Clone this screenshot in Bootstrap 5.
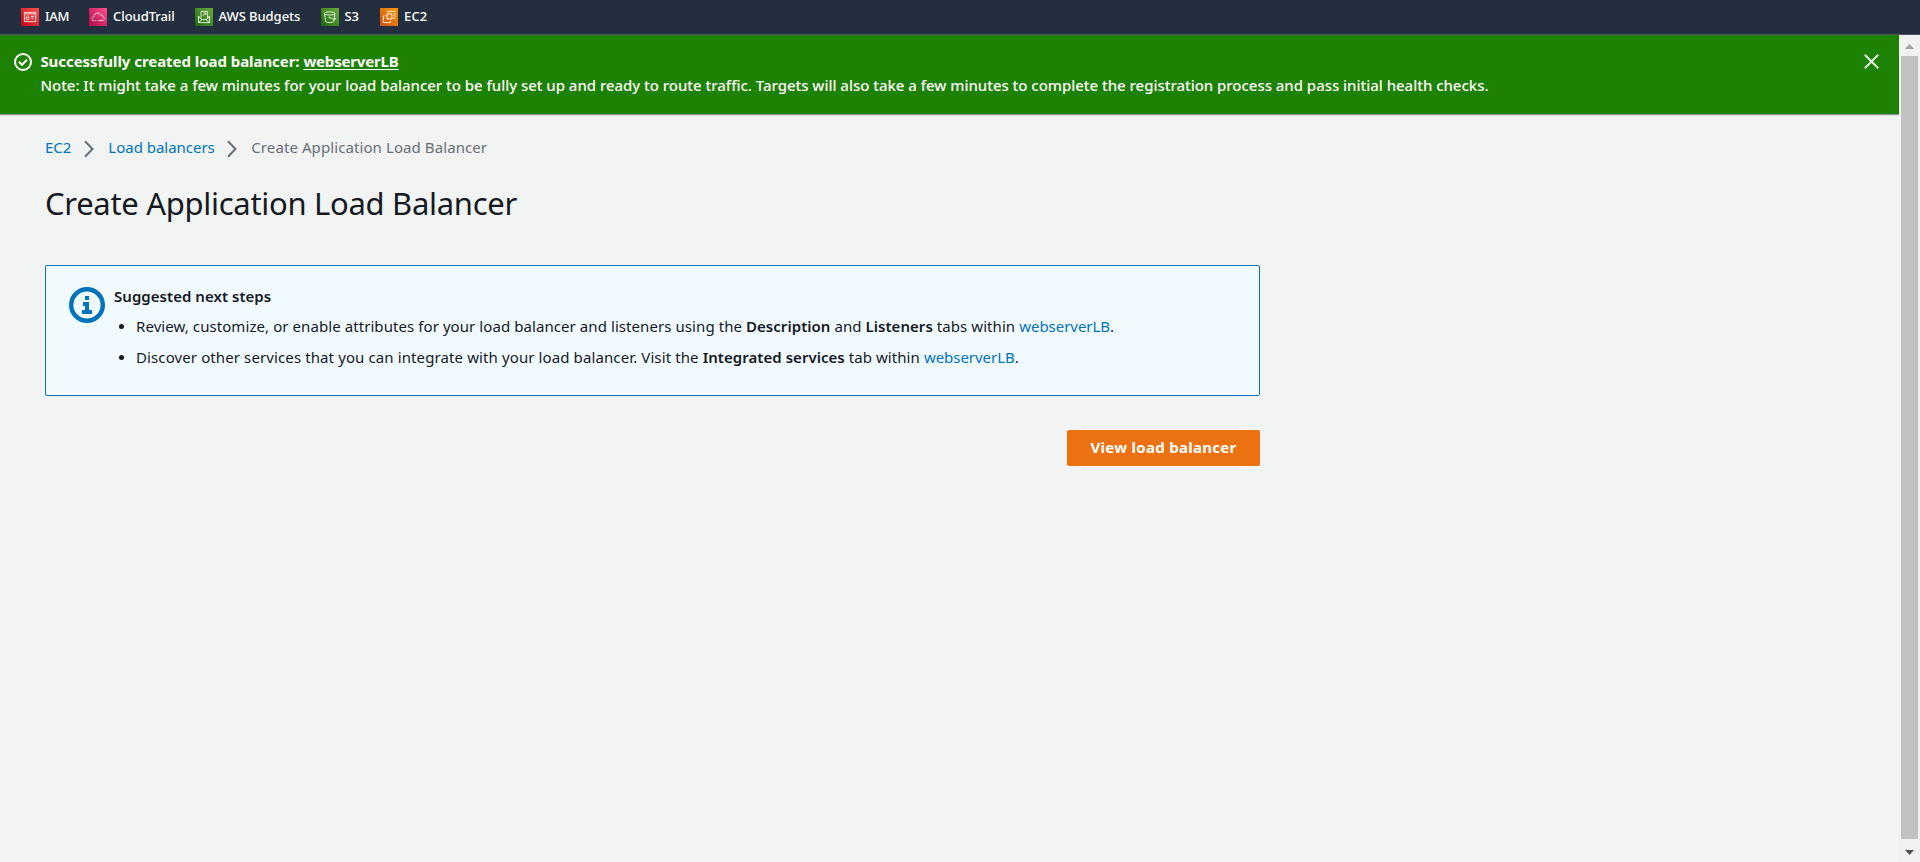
<!DOCTYPE html>
<html lang="en">
<head>
<meta charset="utf-8">
<title>Create Application Load Balancer</title>
<link href="https://cdn.jsdelivr.net/npm/bootstrap@5.3.0/dist/css/bootstrap.min.css" rel="stylesheet">
<style>
body{font:400 15px/24px "Noto Sans",sans-serif;background:#f2f3f3;color:#16191f;height:862px;overflow:hidden}
svg{display:block;flex:none}
a{text-decoration:none;color:#0073bb}
.svc-bar{height:35px;background:#232f3e;border-bottom:1px solid #4d5563;padding-left:21px}
.svc-item{color:#fff;font-size:13px;font-weight:500;line-height:16px;height:34px;gap:6px;letter-spacing:-.05px}
.svc-item span{margin-bottom:2px}
.viewport{height:827px}
.flash{height:79px;background:#1d8102;color:#fff;padding:14px 20px 0 14px;font-weight:500;box-shadow:0 1px 1px rgba(0,28,36,.45)}
.flash .title{font-weight:700;letter-spacing:-.05px}
.flash .title a{color:#fff;text-decoration:underline;text-underline-offset:2px;letter-spacing:-.17px}
.flash .note{letter-spacing:-.03px}
.content{padding:21px 0 0 45px;width:1260px}
.crumbs{height:24px}
.crumbs a{letter-spacing:-.02px}
.page-title{font-size:31px;line-height:38px;font-weight:400;letter-spacing:-.3px;margin:25px 0 43px}
.tips{height:131px;border:1px solid #0073bb;border-radius:2px;background:#f1faff;padding:18px 0 0 23px}
.tips strong{font-weight:600;letter-spacing:.04px}
.tips ul{list-style:none;margin:6px 0 0;padding:0;letter-spacing:.07px}
.tips li{display:flex;height:24px;margin-bottom:7px;white-space:pre}
.tips li::before{content:"";width:5px;height:5px;border-radius:50%;background:#16191f;margin:10px 12px 0 5px}
.tips li a{letter-spacing:-.03px}
.btn-view{background:#ec7211;color:#fff;font:700 15px/24px "Noto Sans",sans-serif;letter-spacing:.282px;width:193px;height:36px;border:0;border-radius:2px;padding:5px 0 7px;margin-top:34px}
.scroller{width:21px;background:#f1f1f1}
.scroller .thumb{width:17px;background:#c1c1c1;margin-left:2px}
</style>
<script src="https://cdn.jsdelivr.net/npm/bootstrap@5.3.0/dist/js/bootstrap.bundle.min.js"></script>
</head>
<body>
<svg width="0" height="0" class="position-absolute"><defs>
<linearGradient id="gr" x1="0" y1="1" x2="1" y2="0"><stop stop-color="#bd0816"/><stop offset="1" stop-color="#ff5252"/></linearGradient>
<linearGradient id="gp" x1="0" y1="1" x2="1" y2="0"><stop stop-color="#b0084d"/><stop offset="1" stop-color="#ff4f8b"/></linearGradient>
<linearGradient id="gg" x1="0" y1="1" x2="1" y2="0"><stop stop-color="#1b660f"/><stop offset="1" stop-color="#6cae3e"/></linearGradient>
<linearGradient id="go" x1="0" y1="1" x2="1" y2="0"><stop stop-color="#c8511b"/><stop offset="1" stop-color="#f90"/></linearGradient>
</defs></svg>

<nav class="svc-bar d-flex">
  <a href="#" class="svc-item d-flex align-items-center" style="width:68px">
    <svg width="18" height="18" fill="none" stroke="#fff" stroke-width=".8"><rect width="18" height="18" fill="url(#gr)" stroke="none"/><path d="M3.4 4.4h11.2v9.2H3.4zM3.4 5.9h11.2" /><path d="M5 9.4h3v2.2H5zM5.6 9.3v-.8a.9.9 0 0 1 1.8 0v.8M9.6 8.4h3.6M11.4 8.4v3M9.8 9.9h1" stroke-width=".7"/></svg>
    <span style="letter-spacing:-.35px">IAM</span></a>
  <a href="#" class="svc-item d-flex align-items-center" style="width:106px">
    <svg width="18" height="18" fill="none" stroke="#fff" stroke-width=".8"><rect width="18" height="18" fill="url(#gp)" stroke="none"/><path d="M3.2 11.4c-.5-1.6.3-2.7 1.9-3 .1-3.8 5.2-4.7 6.5-1.3 1.3-.6 2.1.1 2.2 1.4 2 .6 1.8 3.7-.4 4H9.5"/><path d="M3.3 12.6h5" stroke-dasharray="1.6 .8"/></svg>
    <span>CloudTrail</span></a>
  <a href="#" class="svc-item d-flex align-items-center" style="width:126px">
    <svg width="18" height="18" fill="none" stroke="#fff" stroke-width=".8"><rect width="18" height="18" fill="url(#gg)" stroke="none"/><path d="M6 9.8V3.4h6.4v6.4M7.6 8l3-3M8.6 4.9h2.1V7M4.6 8.4H3.4v6.2h11.2V8.4h-1.2M3.4 8.8L7 11.6h4l3.6-2.8M3.6 14.4L7 11.6M14.4 14.4L11 11.6"/></svg>
    <span style="margin-left:-.5px">AWS Budgets</span></a>
  <a href="#" class="svc-item d-flex align-items-center" style="width:59px">
    <svg width="18" height="18" fill="none" stroke="#fff" stroke-width=".8"><rect width="18" height="18" fill="url(#gg)" stroke="none"/><ellipse cx="8.7" cy="5.5" rx="5.3" ry="1.6"/><path d="M3.4 5.6l1.3 8c1.2 1.4 6.8 1.4 8 0l1.3-8M8.6 9.5c1.6.9 5 2.3 6 1.6.5-.6-.8-1.4-1.6-1.8"/><circle cx="8.4" cy="9.4" r=".5"/></svg>
    <span style="margin-left:-.5px">S3</span></a>
  <a href="#" class="svc-item d-flex align-items-center">
    <svg width="18" height="18" fill="none" stroke="#fff" stroke-width=".8"><rect width="18" height="18" fill="url(#go)" stroke="none"/><path d="M7 6h4.8v4.8H7z"/><path d="M8.2 6V4.9M10.6 6V4.9M8.2 11.9v-1.1M10.6 11.9v-1.1M7 7.2H5.9M7 9.6H5.9M12.9 7.2h-1.1M12.9 9.6h-1.1" stroke-width=".6"/><path d="M7.4 5V3.4h7.2v7h-1.8M5.2 7.8H3.4v6.8h7v-1.8"/></svg>
    <span style="letter-spacing:.15px">EC2</span></a>
</nav>

<div class="viewport d-flex">
  <main class="flex-grow-1">
    <div class="flash d-flex">
      <svg width="18" height="18" viewBox="0 0 18 18" fill="none" stroke="#fff" stroke-width="2" style="margin:4px 8.4px 0 0"><circle cx="9" cy="9" r="8"/><path d="M5 8.8l3 3 5-5"/></svg>
      <div class="flex-grow-1">
        <div class="title">Successfully created load balancer: <a href="#">webserverLB</a></div>
        <div class="note">Note: It might take a few minutes for your load balancer to be fully set up and ready to route traffic. Targets will also take a few minutes to complete the registration process and pass initial health checks.</div>
      </div>
      <svg width="15" height="15" stroke="#e4efe1" stroke-width="2" style="margin-top:5px" role="button" aria-label="Close"><path d="M.8.8l13.4 13.4M14.2.8L.8 14.2"/></svg>
    </div>

    <div class="content">
      <nav class="crumbs d-flex" aria-label="breadcrumb">
        <a href="#">EC2</a>
        <svg width="11" height="18" fill="none" stroke="#687078" stroke-width="2" style="margin:5px 13px 0 13px"><path d="M1 1.3l7.5 7.7L1 16.7"/></svg>
        <a href="#">Load balancers</a>
        <svg width="11" height="18" fill="none" stroke="#687078" stroke-width="2" style="margin:5px 13px 0 12.5px"><path d="M1 1.3l7.5 7.7L1 16.7"/></svg>
        <span style="color:#687078;letter-spacing:.09px">Create Application Load Balancer</span>
      </nav>
      <h1 class="page-title">Create Application Load Balancer</h1>

      <section class="tips d-flex">
        <svg width="36" height="36" viewBox="0 0 36 36" style="margin:3px 9px 0 0"><circle cx="18" cy="18" r="15.8" fill="none" stroke="#0073bb" stroke-width="4.4"/><path fill="#0073bb" d="M16 9h4v4h-4zM14 15h6v8h3v4H13v-4h3v-4h-2z"/></svg>
        <div>
          <strong>Suggested next steps</strong>
          <ul>
            <li><span style="letter-spacing:.075px">Review, customize, or enable attributes for your load balancer and listeners using the </span><strong>Description</strong><span> and </span><strong>Listeners</strong><span> tabs within </span><a href="#">webserverLB</a>.</li>
            <li><span style="letter-spacing:.11px">Discover other services that you can integrate with your load balancer. Visit the </span><strong>Integrated services</strong><span> tab within </span><a href="#">webserverLB</a>.</li>
          </ul>
        </div>
      </section>

      <div class="d-flex justify-content-end"><button class="btn-view" type="button">View load balancer</button></div>
    </div>
  </main>

  <div class="scroller d-flex flex-column">
    <svg width="21" height="21"><path d="M6 14l4.5-5 4.5 5z" fill="#a3a3a3"/></svg>
    <div class="thumb flex-grow-1"></div>
    <svg width="21" height="23"><path d="M6 11l4.5 5 4.5-5z" fill="#505050"/></svg>
  </div>
</div>
</body>
</html>
